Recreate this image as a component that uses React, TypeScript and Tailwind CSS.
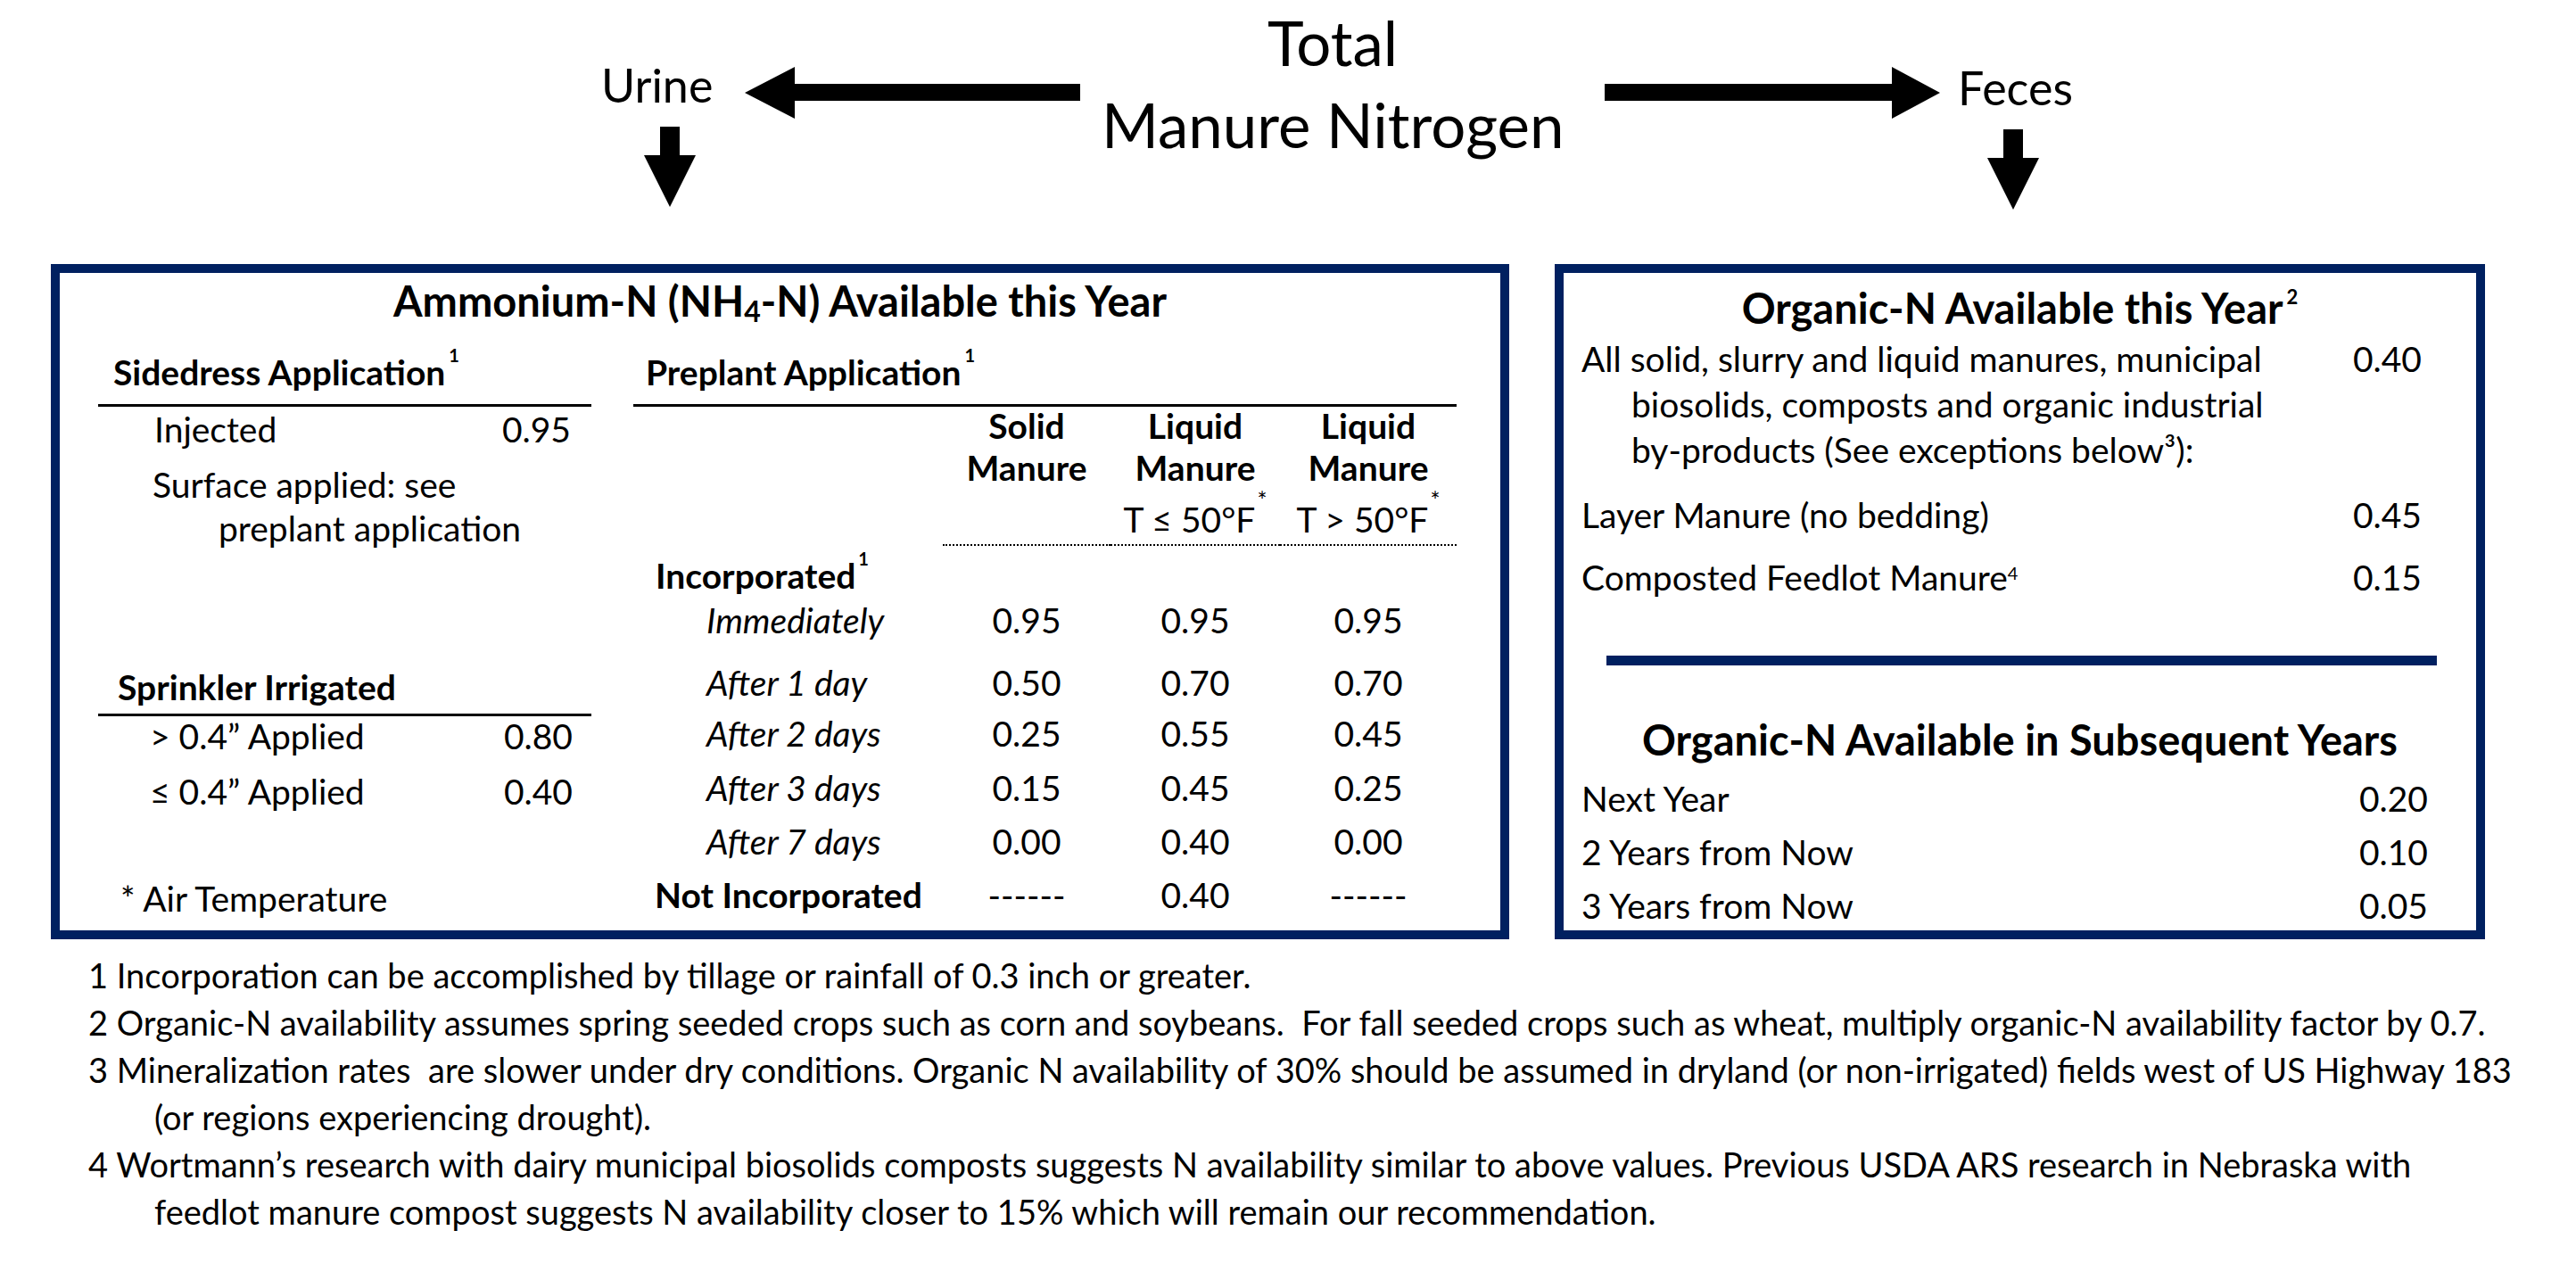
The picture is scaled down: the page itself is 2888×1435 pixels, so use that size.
import React from "react";

const NAVY = "#002060";

function LeftArrow() {
  return (
    <svg width="376" height="58" viewBox="0 0 376 58" className="mt-[75px] shrink-0">
      <polygon points="0,29 56,0 56,19 376,19 376,38 56,38 56,58" fill="#000" />
    </svg>
  );
}

function RightArrow() {
  return (
    <svg width="376" height="58" viewBox="0 0 376 58" className="mt-[75px] ml-[46px] shrink-0">
      <polygon points="0,19 322,19 322,0 376,29 322,58 322,38 0,38" fill="#000" />
    </svg>
  );
}

function DownArrow({ className }: { className?: string }) {
  return (
    <svg width="58" height="90" viewBox="0 0 58 90" className={className}>
      <polygon points="18,0 40,0 40,32 58,32 29,90 0,32 18,32" fill="#000" />
    </svg>
  );
}

const cols = "grid grid-cols-[347px_188px_190px_198px]";

function DataRow({
  label,
  v,
  className,
  labelClass,
}: {
  label: string;
  v: [string, string, string];
  className?: string;
  labelClass?: string;
}) {
  return (
    <div className={`${cols} leading-[50px] ${className ?? ""}`}>
      <div className={labelClass}>{label}</div>
      <div className="text-center">{v[0]}</div>
      <div className="text-center">{v[1]}</div>
      <div className="text-center">{v[2]}</div>
    </div>
  );
}

export default function App() {
  return (
    <div className="w-[2888px] h-[1435px] overflow-hidden bg-white text-black font-[Lato,sans-serif]">
      {/* Header diagram */}
      <div className="flex h-[296px]">
        <div className="ml-[674px] w-[161px] flex flex-col shrink-0">
          <div className="mt-[65px] text-[52px] leading-[60px]">Urine</div>
          <DownArrow className="ml-[48px] mt-[17px]" />
        </div>
        <LeftArrow />
        <div className="ml-[24px] w-[518px] shrink-0 mt-[2px] text-center text-[69px] leading-[92px] whitespace-nowrap">
          <div>Total</div>
          <div>Manure Nitrogen</div>
        </div>
        <RightArrow />
        <div className="ml-[20px] flex flex-col shrink-0">
          <div className="mt-[68px] text-[52px] leading-[60px]">Feces</div>
          <DownArrow className="ml-[33px] mt-[17px]" />
        </div>
      </div>

      {/* Boxes */}
      <div className="flex gap-[51px] pl-[57px]">
        {/* Left box */}
        <div className="w-[1635px] shrink-0 border-[10px] border-[#002060] pb-[11px]">
          <div className="pt-[3px] text-center font-bold text-[47px] leading-[56px] whitespace-nowrap">
            Ammonium-N (NH<sub className="text-[32px] top-[6px]">4</sub>-N) Available this Year
          </div>
          <div className="flex pl-[43px] gap-[47px] pr-[49px] text-[39px] whitespace-nowrap">
            {/* Sidedress column */}
            <div className="w-[553px] shrink-0">
              <div className="mt-[27px] pl-[17px] font-bold leading-[50px] pb-[11px] border-b-[3px] border-black">
                Sidedress Application<sup className="text-[20px] -top-[26px] ml-[4px]">1</sup>
              </div>
              <div className="flex justify-between pl-[63px] pr-[23px] leading-[50px]">
                <span>Injected</span>
                <span>0.95</span>
              </div>
              <div className="mt-[13px] leading-[49px]">
                <div className="pl-[61px]">Surface applied: see</div>
                <div className="pl-[135px]">preplant application</div>
              </div>
              <div className="mt-[128px] pl-[22px] font-bold leading-[50px] pb-[5px] border-b-[3px] border-black">
                Sprinkler Irrigated
              </div>
              <div className="flex justify-between pl-[58px] pr-[21px] leading-[44px]">
                <span>&gt; 0.4” Applied</span>
                <span>0.80</span>
              </div>
              <div className="mt-[15px] flex justify-between pl-[58px] pr-[21px] leading-[50px]">
                <span>≤ 0.4” Applied</span>
                <span>0.40</span>
              </div>
              <div className="mt-[70px] pl-[25px] leading-[50px]">* Air Temperature</div>
            </div>

            {/* Preplant column */}
            <div className="w-[923px] shrink-0">
              <div className="mt-[27px] pl-[14px] font-bold leading-[50px] pb-[11px] border-b-[3px] border-black">
                Preplant Application<sup className="text-[20px] -top-[26px] ml-[4px]">1</sup>
              </div>
              <div className={`${cols} text-center`}>
                <div />
                <div className="pb-[3px] border-b-2 border-dotted border-black">
                  <div className="-mt-[2px] font-bold leading-[47px]">
                    Solid
                    <br />
                    Manure
                  </div>
                </div>
                <div className="pb-[3px] border-b-2 border-dotted border-black">
                  <div className="-mt-[2px] font-bold leading-[47px]">
                    Liquid
                    <br />
                    Manure
                  </div>
                  <div className="mt-[9px] leading-[50px]">
                    T ≤ 50°F<sup className="text-[26px] -top-[26px] ml-[2px]">*</sup>
                  </div>
                </div>
                <div className="pb-[3px] border-b-2 border-dotted border-black">
                  <div className="-mt-[2px] font-bold leading-[47px]">
                    Liquid
                    <br />
                    Manure
                  </div>
                  <div className="mt-[9px] leading-[50px]">
                    T &gt; 50°F<sup className="text-[26px] -top-[26px] ml-[2px]">*</sup>
                  </div>
                </div>
              </div>
              <div className="mt-[8px] pl-[25px] font-bold leading-[50px]">
                Incorporated<sup className="text-[20px] -top-[26px] ml-[3px]">1</sup>
              </div>
              <DataRow label="Immediately" v={["0.95", "0.95", "0.95"]} labelClass="pl-[82px] italic" />
              <DataRow label="After 1 day" v={["0.50", "0.70", "0.70"]} labelClass="pl-[82px] italic" className="mt-[20px]" />
              <DataRow label="After 2 days" v={["0.25", "0.55", "0.45"]} labelClass="pl-[82px] italic" className="mt-[7px]" />
              <DataRow label="After 3 days" v={["0.15", "0.45", "0.25"]} labelClass="pl-[82px] italic" className="mt-[11px]" />
              <DataRow label="After 7 days" v={["0.00", "0.40", "0.00"]} labelClass="pl-[82px] italic" className="mt-[10px]" />
              <DataRow label="Not Incorporated" v={["------", "0.40", "------"]} labelClass="pl-[24px] font-bold" className="mt-[10px]" />
            </div>
          </div>
        </div>

        {/* Right box */}
        <div className="w-[1043px] shrink-0 border-[10px] border-[#002060] pb-[3px] text-[39px] whitespace-nowrap">
          <div className="pt-[11px] text-center font-bold text-[47px] leading-[56px]">
            Organic-N Available this Year<sup className="text-[22px] -top-[22px] ml-[4px]">2</sup>
          </div>
          <div className="mt-[4px] flex justify-between pl-[20px] pr-[61px] leading-[51px]">
            <div>
              <div>All solid, slurry and liquid manures, municipal</div>
              <div className="pl-[56px]">biosolids, composts and organic industrial</div>
              <div className="pl-[56px]">by-products (See exceptions below³):</div>
            </div>
            <div>0.40</div>
          </div>
          <div className="mt-[22px] flex justify-between pl-[20px] pr-[61px] leading-[50px]">
            <span>Layer Manure (no bedding)</span>
            <span>0.45</span>
          </div>
          <div className="mt-[20px] flex justify-between pl-[20px] pr-[61px] leading-[50px]">
            <span>
              Composted Feedlot Manure<sup className="text-[20px] -top-[12px]">4</sup>
            </span>
            <span>0.15</span>
          </div>
          <div className="mt-[63px] ml-[48px] mr-[44px] h-[11px]" style={{ backgroundColor: NAVY }} />
          <div className="mt-[55px] text-center font-bold text-[47px] leading-[56px]">
            Organic-N Available in Subsequent Years
          </div>
          <div className="mt-[13px] flex justify-between pl-[20px] pr-[54px] leading-[50px]">
            <span>Next Year</span>
            <span>0.20</span>
          </div>
          <div className="mt-[10px] flex justify-between pl-[20px] pr-[54px] leading-[50px]">
            <span>2 Years from Now</span>
            <span>0.10</span>
          </div>
          <div className="mt-[10px] flex justify-between pl-[20px] pr-[54px] leading-[50px]">
            <span>3 Years from Now</span>
            <span>0.05</span>
          </div>
        </div>
      </div>

      {/* Footnotes */}
      <div className="mt-[14px] pl-[99px] text-[38px] leading-[53px] whitespace-pre">
        <div>1 Incorporation can be accomplished by tillage or rainfall of 0.3 inch or greater.</div>
        <div>
          2 Organic-N availability assumes spring seeded crops such as corn and soybeans.  For fall seeded crops such as wheat, multiply organic-N availability factor by 0.7.
        </div>
        <div>
          3 Mineralization rates  are slower under dry conditions. Organic N availability of 30% should be assumed in dryland (or non-irrigated) fields west of US Highway 183
        </div>
        <div className="pl-[74px]">(or regions experiencing drought).</div>
        <div>
          4 Wortmann’s research with dairy municipal biosolids composts suggests N availability similar to above values. Previous USDA ARS research in Nebraska with
        </div>
        <div className="pl-[74px]">feedlot manure compost suggests N availability closer to 15% which will remain our recommendation.</div>
      </div>
    </div>
  );
}
